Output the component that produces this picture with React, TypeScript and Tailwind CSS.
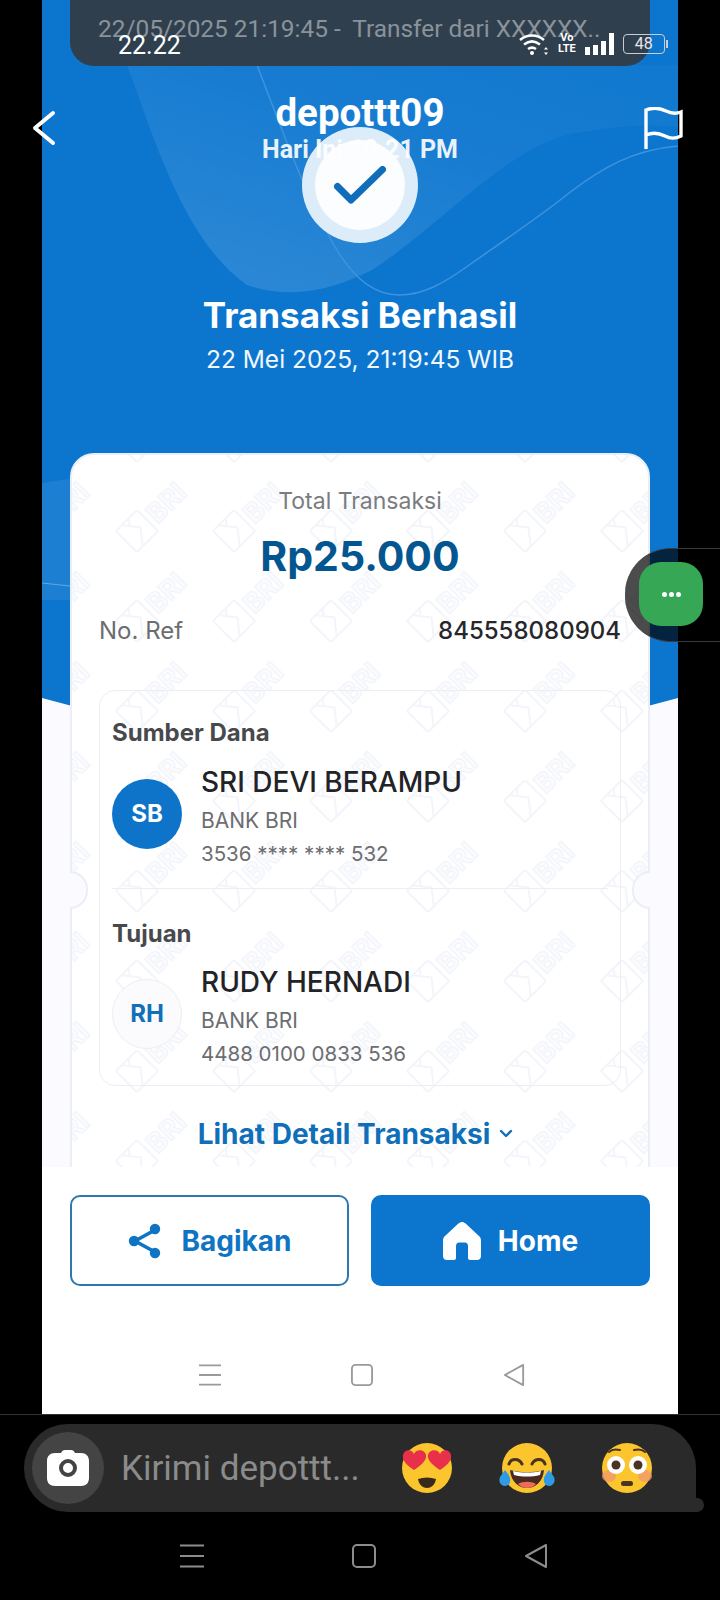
import React from "react";

const inter = "font-['Inter','Liberation_Sans',sans-serif]";

function Person({ initials, name, bank, account, solid }: { initials: string; name: string; bank: string; account: string; solid: boolean }) {
  return (
    <div className="flex items-start">
      <div className={`mt-[13px] flex h-[70px] w-[70px] shrink-0 items-center justify-center rounded-full text-[24px] font-bold ${solid ? "bg-[#0d74c9] text-white" : "border border-[#eeeef3] bg-[#fbfbfd] text-[#126fb9]"}`}>
        {initials}
      </div>
      <div className="ml-[19px]">
        <div className="text-[28px] font-medium leading-[32px] text-[#222326]">{name}</div>
        <div className="mt-[9px] text-[21px] leading-[28px] text-[#6c6d70]">{bank}</div>
        <div className="mt-[5px] text-[20.5px] leading-[28px] text-[#6c6d70]">{account}</div>
      </div>
    </div>
  );
}

function Watermark() {
  const marks: [number, number][] = [];
  for (let row = 0; row < 9; row++) {
    for (let col = 0; col < 7; col++) {
      marks.push([65 - 97 + col * 97, 76 - 90 + row * 90]);
    }
  }
  return (
    <svg className="absolute inset-0 h-full w-full overflow-hidden" aria-hidden="true">
      {marks.map(([x, y], i) => (
        <g key={i} transform={`translate(${x} ${y}) rotate(-45)`} fill="none" stroke="#f3f5fb" strokeWidth="2">
          <path d="M-15 -13 Q-15 -15 -13 -15 H13 L15 -13 V13 Q15 15 13 15 H-13 Q-15 15 -15 13 Z" />
          <path d="M-7 -15 L5 0 L-7 15 M3 -15 L-2 -8" />
          <text x="19" y="10" fontSize="27" fontWeight="700" fontFamily="Inter, sans-serif" fill="#fbfcfe" strokeWidth="1.4">BRI</text>
        </g>
      ))}
    </svg>
  );
}

function HeartEyes() {
  return (
    <svg viewBox="0 0 52 50" className="h-[50px] w-[52px]">
      <circle cx="26" cy="25" r="25" fill="#fbc52d" />
      <path d="M17 36c6-2 12-2 18 0-1 6-5 9-9 9s-8-3-9-9z" fill="#3a2a1c" />
      <path d="M13 27C6 22 1 18 2 12c1-5 8-7 11-1 3-6 11-4 12 1 1 6-6 11-12 15z" fill="#e8304a" />
      <path d="M39 27c-6-4-13-9-12-15 1-5 9-7 12-1 3-6 10-4 11 1 1 6-4 10-11 15z" fill="#e8304a" />
    </svg>
  );
}

function Joy() {
  return (
    <svg viewBox="0 0 56 50" className="h-[50px] w-[56px]">
      <circle cx="28" cy="25" r="25" fill="#fbc52d" />
      <path d="M10 21c2-6 10-6 13 0M33 21c3-6 11-6 13 0" fill="none" stroke="#4a3322" strokeWidth="3" strokeLinecap="round" />
      <path d="M11 27c11 3 23 3 34 0-1 12-9 18-17 18s-16-6-17-18z" fill="#4a2a20" />
      <path d="M14 28c9 2 19 2 28 0l-1 4c-8 2-18 2-26 0z" fill="#fff" />
      <path d="M19 41c5-3 13-3 18 0-3 3-6 4-9 4s-6-1-9-4z" fill="#ef6a5a" />
      <path d="M6 27c4 5 6 8 5 12-1 4-6 5-8 3-3-2-3-5-2-8z" fill="#2f9be6" />
      <path d="M50 27c-4 5-6 8-5 12 1 4 6 5 8 3 3-2 3-5 2-8z" fill="#2f9be6" />
    </svg>
  );
}

function Flushed() {
  return (
    <svg viewBox="0 0 52 50" className="h-[50px] w-[52px]">
      <circle cx="26" cy="25" r="25" fill="#fbc52d" />
      <ellipse cx="8" cy="33" rx="7" ry="6" fill="#f39a6b" opacity=".8" />
      <ellipse cx="44" cy="33" rx="7" ry="6" fill="#f39a6b" opacity=".8" />
      <circle cx="15" cy="22" r="9" fill="#fff" />
      <circle cx="37" cy="22" r="9" fill="#fff" />
      <circle cx="15" cy="22" r="4.500" fill="#4a3322" />
      <circle cx="37" cy="22" r="4.500" fill="#4a3322" />
      <path d="M8 9c3-3 7-3 11-2M33 7c4-1 8-1 11 2" fill="none" stroke="#4a3322" strokeWidth="2" strokeLinecap="round" />
      <rect x="20" y="38" width="12" height="5" rx="2.500" fill="#4a3322" />
    </svg>
  );
}

function NavIcons({ color, large }: { color: string; large: boolean }) {
  const s = large ? 24 : 22;
  return (
    <>
      <svg width={s} height={s} viewBox="0 0 24 24" fill="none" stroke={color} strokeWidth="2">
        <path d="M0 1.500h24M0 12h24M0 22.500h24" />
      </svg>
      <svg width={s} height={s} viewBox="0 0 24 24" fill="none" stroke={color} strokeWidth="2">
        <rect x="1" y="1" width="22" height="22" rx="4" />
      </svg>
      <svg width={s} height={s} viewBox="0 0 24 24" fill="none" stroke={color} strokeWidth="2" strokeLinejoin="round">
        <path d="M2 12 22 1v22z" />
      </svg>
    </>
  );
}

export default function App() {
  return (
    <div className={`relative h-[1600px] w-[720px] overflow-hidden bg-black ${inter}`}>
      <main className="relative ml-[42px] flex h-[1414px] w-[636px] flex-col overflow-hidden bg-white">
        <div className="relative flex h-[1167px] shrink-0 flex-col overflow-hidden bg-[#fbfaff] px-[28px]">
          <svg className="absolute left-0 top-0 h-[720px] w-[636px]" viewBox="0 0 636 720" aria-hidden="true">
            <defs>
              <linearGradient id="heroGlow" x1="0.1" y1="1" x2="0.9" y2="0">
                <stop offset="0" stopColor="#ffffff" stopOpacity=".14" />
                <stop offset=".6" stopColor="#ffffff" stopOpacity=".05" />
                <stop offset="1" stopColor="#ffffff" stopOpacity=".02" />
              </linearGradient>
            </defs>
            <path d="M0 0H636V698Q318 789 0 698Z" fill="#0c76cf" />
            <path d="M85 65C110 130 140 240 205 285C250 300 290 290 330 270C400 225 470 140 540 132C580 125 610 124 636 127V65Z" fill="url(#heroGlow)" />
            <path d="M215 65C240 130 262 190 284 230C296 255 320 295 357 295C380 295 400 285 430 263C470 235 500 215 527 193C560 168 590 150 636 146" fill="none" stroke="#3f93dc" strokeWidth="1.500" />
            <path d="M0 483C10 481 20 480 28 479V600H0Z" fill="#ffffff" opacity=".07" />
            <path d="M0 583 28 586" fill="none" stroke="#5ea9e6" strokeWidth="1" />
          </svg>

          <div className="relative flex flex-col items-center text-white">
            <div className="mt-[127px] flex h-[116px] w-[116px] items-center justify-center rounded-full bg-[#dcecf9]">
              <div className="flex h-[90px] w-[90px] items-center justify-center rounded-full bg-[#fbfdfe]">
                <svg width="52" height="38" viewBox="0 0 52 38" fill="none" stroke="#0f6db9" strokeWidth="7" strokeLinecap="round" strokeLinejoin="round">
                  <path d="M3.500 20.500 17 34 48.500 3.500" />
                </svg>
              </div>
            </div>
            <h1 className="mt-[52px] text-[35px] font-bold leading-[40px]">Transaksi Berhasil</h1>
            <p className="mt-[9px] text-[24.500px] leading-[30px] text-[#f1f7fd]">22 Mei 2025, 21:19:45 WIB</p>
          </div>

          <section className="relative mt-[79px] shrink-0 rounded-t-[24px] border-2 border-[#eaeff7] bg-white pb-[60px]">
            <Watermark />
            <div className="relative -mt-[2px]">
              <div className="pt-[34px] text-center text-[23px] leading-[28px] text-[#7a7c80]">Total Transaksi</div>
              <div className="mt-[17px] text-center text-[41px] font-bold leading-[48px] text-[#03568f]">Rp25.000</div>
              <div className="mt-[37px] flex justify-between px-[27px] text-[24px] leading-[28px]">
                <span className="text-[#6c6d70]">No. Ref</span>
                <span className="font-medium text-[#26272b]">845558080904</span>
              </div>
              <div className="mx-[27px] mt-[45px] rounded-[16px] border border-[#eceef3] px-[12px] pb-[17px] pt-[30px]">
                <h2 className="text-[24px] font-bold leading-[24px] text-[#48494c]">Sumber Dana</h2>
                <div className="mt-[21px]">
                  <Person initials="SB" name="SRI DEVI BERAMPU" bank="BANK BRI" account="3536 **** **** 532" solid />
                </div>
                <div className="mt-[20px] h-px bg-[#eceef3]" />
                <h2 className="mt-[33px] text-[24px] font-bold leading-[24px] text-[#48494c]">Tujuan</h2>
                <div className="mt-[20px]">
                  <Person initials="RH" name="RUDY HERNADI" bank="BANK BRI" account="4488 0100 0833 536" solid={false} />
                </div>
              </div>
              <div className="mt-[34px] flex items-center justify-center gap-[9px] pr-[9px] text-[28px] font-bold leading-[28px] text-[#0f6fb8]">
                Lihat Detail Transaksi
                <svg width="14" height="10" viewBox="0 0 14 10" fill="none" stroke="#0f6fb8" strokeWidth="2.400" strokeLinecap="round" strokeLinejoin="round">
                  <path d="M2 2 7 7 12 2" />
                </svg>
              </div>
            </div>
            <div className="absolute -left-[2px] top-[416px] h-[38px] w-[18px] rounded-r-[19px] border-2 border-l-0 border-[#eaeff7] bg-[#fbfaff]" />
            <div className="absolute -right-[2px] top-[416px] h-[38px] w-[18px] rounded-l-[19px] border-2 border-r-0 border-[#eaeff7] bg-[#fbfaff]" />
          </section>
        </div>

        <div className="mx-[28px] mt-[28px] flex gap-[22px]">
          <button className="flex h-[91px] flex-1 basis-0 items-center justify-center gap-[20px] rounded-[10px] border-2 border-[#2b79ad] bg-white text-[28px] font-bold text-[#0f74c4]">
            <svg width="34" height="36" viewBox="0 0 34 36" fill="#0f74c4" stroke="#0f74c4" strokeWidth="3.600">
              <path d="M27 7 7 18l20 11" fill="none" />
              <circle cx="27" cy="6" r="3.400" />
              <circle cx="6" cy="18" r="3.400" />
              <circle cx="27" cy="30" r="3.400" />
            </svg>
            Bagikan
          </button>
          <button className="flex h-[91px] flex-1 basis-0 items-center justify-center gap-[17px] rounded-[10px] border-2 border-[#0c76cf] bg-[#0c76cf] text-[28px] font-bold text-white">
            <svg width="38" height="38" viewBox="0 0 38 38" fill="#ffffff">
              <path d="M19 0c1.400 0 2.500.5 3.600 1.600L36 14c1.400 1.300 2 2.600 2 4.500V34c0 2.400-1.600 4-4 4h-7c-1.200 0-2-.8-2-2V24c0-2-1.200-3.500-3-3.500h-6c-1.800 0-3 1.500-3 3.500v12c0 1.200-.8 2-2 2H4c-2.400 0-4-1.600-4-4V18.500C0 16.600.6 15.300 2 14L15.400 1.600C16.500.5 17.600 0 19 0z" />
            </svg>
            Home
          </button>
        </div>

        <div className="mt-[78px] flex items-center justify-center gap-[130px] pl-[4px]">
          <NavIcons color="#9a9a9a" large={false} />
        </div>
      </main>

      <div className="h-px bg-[#333333]" />

      <div className="relative mx-[24px] mt-[9px] flex h-[88px] items-center rounded-[44px] rounded-br-none bg-[#2a2a2a] pl-[8px]">
        <div className="flex h-[72px] w-[72px] shrink-0 items-center justify-center rounded-full bg-[#444444]">
          <svg width="42" height="36" viewBox="0 0 42 36">
            <path fillRule="evenodd" fill="#ffffff" d="M14 3c1-2 2-3 4-3h6c2 0 3 1 4 3h6c5 0 8 3 8 8v17c0 5-3 8-8 8H8c-5 0-8-3-8-8V11c0-5 3-8 8-8zM21 9a9 9 0 1 0 0 18 9 9 0 0 0 0-18zm0 4a5 5 0 1 1 0 10 5 5 0 0 1 0-10z" />
          </svg>
        </div>
        <span className="ml-[17px] w-[240px] whitespace-nowrap font-['Roboto',sans-serif] text-[35px] leading-none text-[#8b8b8b]">Kirimi depottt...</span>
        <div className="ml-[40px] flex items-center gap-[46px]">
          <HeartEyes />
          <Joy />
          <Flushed />
        </div>
        <div className="absolute -right-[8px] bottom-0 h-[14px] w-[16px] rounded-[7px] bg-[#2a2a2a]" />
      </div>

      <div className="mt-[32px] flex items-center justify-center gap-[148px] pl-[8px]">
        <NavIcons color="#8c8c8c" large />
      </div>

      {/* notification sheet sliding over the page */}
      <div className="absolute left-[70px] top-0 h-[66px] w-[580px] rounded-b-[24px] bg-[#303f4d] pl-[28px] pt-[13px] font-['Roboto',sans-serif] text-[24.400px] leading-[32px] text-[#8a939b]">
        22/05/2025 21:19:45 -&nbsp; Transfer dari XXXXXX..
      </div>

      {/* status bar */}
      <div className="absolute left-[118px] top-[31px] font-['Roboto',sans-serif] text-[25px] leading-[30px] text-white">22.22</div>
      <div className="absolute left-[519px] top-[32px] flex items-center font-['Roboto',sans-serif] text-white">
        <svg width="30" height="24" viewBox="0 0 30 24" fill="none" stroke="#ffffff" strokeWidth="2.600">
          <path d="M1 8c7-6 17-6 24 0M5 12.500c5-4 11-4 16 0M9 17c3-2 5-2 8 0" />
          <circle cx="13" cy="21" r="2" fill="#ffffff" stroke="none" />
          <path d="M27 15l2 2.500h-4zM27 23l2-2.500h-4z" fill="#ffffff" stroke="none" />
        </svg>
        <div className="ml-[9px] flex h-[24px] flex-col text-center text-[11px] font-bold leading-[11px]">
          <span>Vo</span>
          <span>LTE</span>
        </div>
        <div className="ml-[9px] flex h-[22px] items-end gap-[3px]">
          <div className="h-[8px] w-[5px] bg-white" />
          <div className="h-[10px] w-[5px] bg-white" />
          <div className="h-[14px] w-[5px] bg-white" />
          <div className="h-[22px] w-[5px] bg-white" />
        </div>
        <div className="ml-[9px] flex h-[20px] w-[42px] items-center justify-center rounded-[4px] border-[1.5px] border-[#c8ced3] text-[16px] leading-none text-[#e5e8ea]">48</div>
        <div className="ml-[1px] h-[8px] w-[2px] bg-[#c8ced3]" />
      </div>

      {/* chat header */}
      <div className="absolute left-0 top-[94px] flex w-[720px] flex-col items-center font-['Roboto',sans-serif] font-bold text-white">
        <div className="text-[38.500px] leading-[38px]">depottt09</div>
        <div className="mt-[3px] text-[25px] leading-[30px] opacity-90">Hari Ini 10.21 PM</div>
      </div>
      <svg className="absolute left-[32px] top-[110px]" width="24" height="36" viewBox="0 0 24 36" fill="none" stroke="#ffffff" strokeWidth="4" strokeLinecap="round" strokeLinejoin="round">
        <path d="M21 3 3 18l18 15" />
      </svg>
      <svg className="absolute left-[644px] top-[107px]" width="40" height="42" viewBox="0 0 40 42" fill="none" stroke="#ffffff" strokeWidth="3.400">
        <path d="M2 42V3c8-3 14-2 20 1s10 3 15 1v24c-6 3-10 3-16 0S9 25 2 28" />
      </svg>

      {/* floating bubble */}
      <div className="absolute left-[625px] top-[548px] h-[94px] w-[110px] rounded-l-[46px] border-y border-[#3a3a3a] bg-black/70" />
      <div className="absolute left-[639px] top-[562px] flex h-[64px] w-[64px] items-center justify-center gap-[2px] rounded-[22px] bg-[#35a755]">
        <span className="h-[5px] w-[5px] rounded-full bg-white" />
        <span className="h-[5px] w-[5px] rounded-full bg-white" />
        <span className="h-[5px] w-[5px] rounded-full bg-white" />
      </div>
    </div>
  );
}
